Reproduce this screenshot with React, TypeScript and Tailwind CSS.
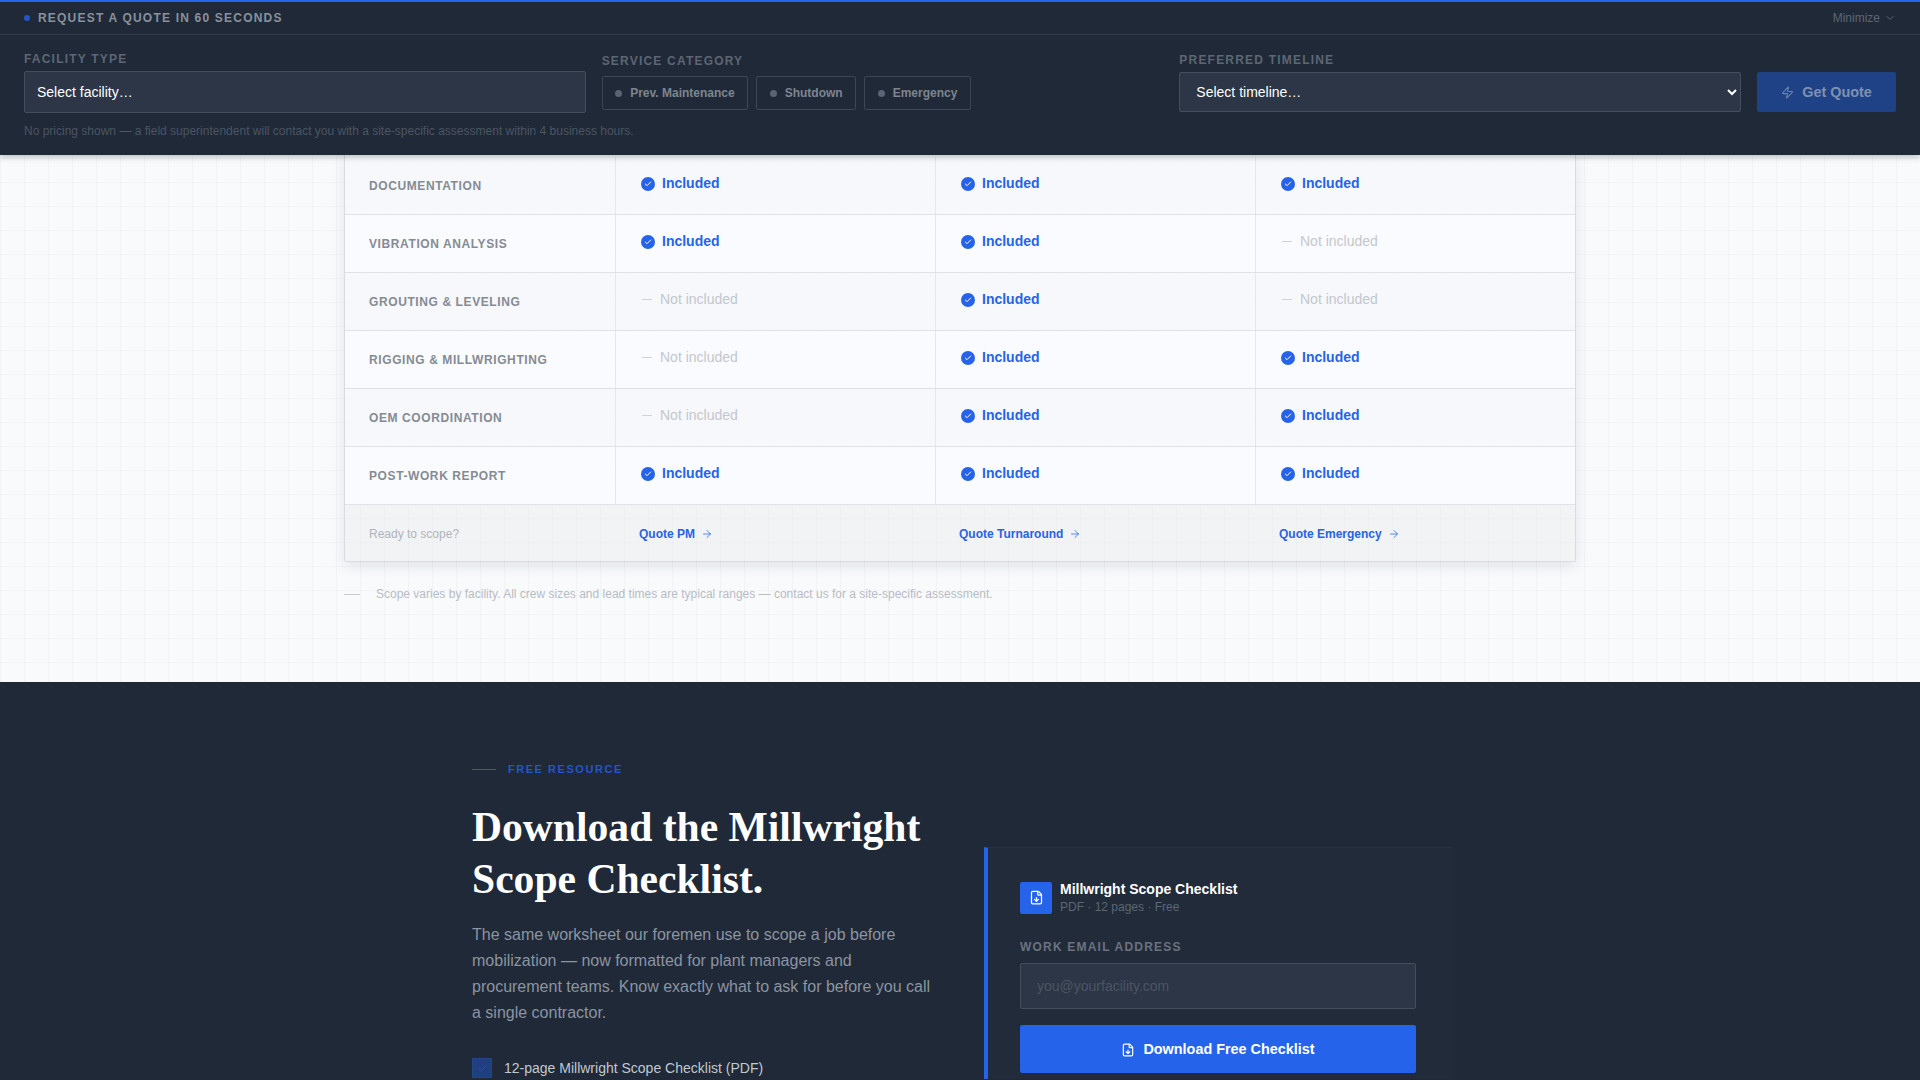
import React from "react";
import { Zap, ChevronDown, ArrowRight, Check, FileDown } from "lucide-react";

const rows: [string, boolean, boolean, boolean, string][] = [
  ["Documentation", true, true, true, "bg-[#f5f7fb]/90"],
  ["Vibration Analysis", true, true, false, "bg-[#fafbfe]/90"],
  ["Grouting & Leveling", false, true, false, "bg-[#f5f7fb]/90"],
  ["Rigging & Millwrighting", false, true, true, "bg-[#fafbfe]/90"],
  ["OEM Coordination", false, true, true, "bg-[#f5f7fb]/90"],
  ["Post-Work Report", true, true, true, "bg-[#fafbfe]/90"],
];

function Cell({ on, last }: { on: boolean; last?: boolean }) {
  return (
    <div className={`flex items-center pl-[25px] pb-1 ${last ? "" : "border-r border-[#e4e7ec]"}`}>
      {on ? (
        <span className="flex items-center gap-[7px] text-[14px] font-bold text-[#2563eb]">
          <span className="flex h-[14px] w-[14px] items-center justify-center rounded-full bg-[#2563eb]">
            <Check size={8} strokeWidth={3} className="text-white" />
          </span>
          Included
        </span>
      ) : (
        <span className="flex items-center gap-2 pl-px text-[14px] text-[#c3c7ce]">
          <span className="h-px w-[10px] bg-[#d0d4da]" />
          Not included
        </span>
      )}
    </div>
  );
}

function Chip({ label }: { label: string }) {
  return (
    <span className="flex h-[34px] items-center gap-[8px] rounded-[2px] border border-[#3c4656] px-[12.5px] text-[12px] font-bold text-[#7d8590]">
      <span className="h-[7px] w-[7px] rounded-full bg-[#5b6472]" />
      {label}
    </span>
  );
}

const lbl = "block text-[12px] leading-[14px] font-bold uppercase tracking-[0.1em] text-[#5d6674]";

export default function App() {
  return (
    <div className="flex h-[1080px] w-[1920px] flex-col overflow-hidden font-['Liberation_Sans',sans-serif]">
      <header className="relative z-10 border-t-2 border-[#2563eb] bg-[#1f2937] shadow-[0_2px_6px_rgba(0,0,0,0.25)]">
        <div className="flex h-[33px] items-center justify-between border-b border-[#323c4a] px-6">
          <div className="flex items-center gap-[8px]">
            <span className="h-[6px] w-[6px] rounded-full bg-[#2456c8]" />
            <span className="text-[12px] font-bold uppercase tracking-[0.1em] text-[#8a919c]">Request a quote in 60 seconds</span>
          </div>
          <div className="flex items-center gap-1 text-[12px] text-[#5d6674]">
            Minimize <ChevronDown size={12} />
          </div>
        </div>
        <div className="px-6 pt-[17px]">
          <div className="grid grid-cols-[1fr_1fr_1fr_139px] items-end gap-4">
            <div>
              <span className={`${lbl} mb-[5px]`}>Facility Type</span>
              <select className="h-[42px] w-full appearance-none rounded-[2px] border border-[#434d5c] bg-[#2c3646] px-3 text-[14px] text-white">
                <option>Select facility…</option>
              </select>
            </div>
            <div className="pb-[3px]">
              <span className={`${lbl} mb-[8px]`}>Service Category</span>
              <div className="flex gap-[8px]">
                <Chip label="Prev. Maintenance" />
                <Chip label="Shutdown" />
                <Chip label="Emergency" />
              </div>
            </div>
            <div className="pb-px">
              <span className={`${lbl} mb-[5px]`}>Preferred Timeline</span>
              <select className="h-[40px] w-full rounded-[2px] border border-[#434d5c] bg-[#2c3646] px-3 text-[14px] text-white">
                <option>Select timeline…</option>
              </select>
            </div>
            <button className="mb-px flex h-[40px] items-center justify-center gap-2 rounded-[2px] bg-[#1f4287] pt-px text-[14.4px] font-bold text-[#7f90b0]">
              <Zap size={13} className="text-[#6e82aa]" /> Get Quote
            </button>
          </div>
          <p className="pb-[15px] pt-[9px] text-[12px] leading-[18px] text-[#4b5563]">
            No pricing shown — a field superintendent will contact you with a site-specific assessment within 4 business hours.
          </p>
        </div>
      </header>

      <section className="h-[527px] shrink-0 bg-[#f8fafc] bg-[linear-gradient(rgba(30,41,59,0.022)_1px,transparent_1px),linear-gradient(90deg,rgba(30,41,59,0.032)_1px,transparent_1px)] bg-[size:24px_24px] bg-[position:0_3px]">
        <div className="mx-[344px] w-[1232px]">
          <div className="rounded-b-[2px] border-x border-b border-[#d8dbe0] shadow-[0_4px_14px_rgba(30,41,59,0.1)]">
            {rows.map(([name, a, b, c, bg], i) => (
              <div key={name} className={`grid grid-cols-[271px_320px_320px_1fr] border-b border-[#dfe2e7] ${bg} ${i === 0 ? "h-[60px] pt-[2px]" : "h-[58px]"}`}>
                <div className="flex items-center border-r border-[#e4e7ec] pl-6 text-[12px] font-bold uppercase tracking-[0.05em] text-[#858b94]">{name}</div>
                <Cell on={a} />
                <Cell on={b} />
                <Cell on={c} last />
              </div>
            ))}
            <div className="grid h-[56px] grid-cols-[271px_320px_320px_1fr] items-center bg-[#e9ebee]/50 pt-px text-[12px]">
              <span className="pl-6 text-[#b0b5bb]">Ready to scope?</span>
              {["Quote PM", "Quote Turnaround", "Quote Emergency"].map((t) => (
                <span key={t} className="flex items-center gap-[6px] pl-[23px] font-bold text-[#2563eb]">
                  {t} <ArrowRight size={12} strokeWidth={1.5} />
                </span>
              ))}
            </div>
          </div>
          <div className="mt-[23px] flex items-center gap-4 text-[12px] leading-[18px] text-[#b8bcc4]">
            <span className="h-px w-4 bg-[#c8ccd2]" />
            Scope varies by facility. All crew sizes and lead times are typical ranges — contact us for a site-specific assessment.
          </div>
        </div>
      </section>

      <section className="flex-1 overflow-hidden bg-[#1f2937] pt-[79px]">
        <div className="mx-[472px] grid w-[980px] grid-cols-[468px_468px] gap-[44px]">
          <div>
            <div className="flex items-center gap-3 text-[11px] font-bold uppercase tracking-[0.14em] text-[#2456c8]">
              <span className="h-px w-6 bg-[#2456c8]" />
              Free Resource
            </div>
            <h2 className="mt-[23px] font-['Liberation_Serif',serif] text-[41.6px] font-bold leading-[52px] text-white">
              Download the Millwright<br />Scope Checklist.
            </h2>
            <p className="mt-[17px] text-[16px] leading-[26px] text-[#8c94a1]">
              The same worksheet our foremen use to scope a job before mobilization — now formatted for plant managers and procurement teams. Know exactly what to ask for before you call a single contractor.
            </p>
            <div className="mt-[32px] flex items-center gap-3 text-[14px] text-[#c2c8d0]">
              <span className="flex h-5 w-5 items-center justify-center border border-[#234584] bg-[#203f80]">
                <Check size={11} className="text-[#31538f]" />
              </span>
              12-page Millwright Scope Checklist (PDF)
            </div>
          </div>
          <div className="mt-[86px] border-l-4 border-t border-[#2563eb] border-t-white/[0.04] bg-white/[0.01] pl-8 pr-9 pt-[31px]">
            <div className="flex items-center gap-2">
              <span className="flex h-8 w-8 items-center justify-center rounded-[2px] bg-[#2563eb]">
                <FileDown size={15} className="text-white" />
              </span>
              <div className="pt-[2px]">
                <div className="text-[14px] font-bold leading-[17px] text-white">Millwright Scope Checklist</div>
                <div className="text-[12px] leading-[18px] text-[#5d6674]">PDF · 12 pages · Free</div>
              </div>
            </div>
            <label className="mb-[7px] mt-[22px] block text-[12px] font-bold uppercase tracking-[0.1em] text-[#6b7280]">Work Email Address</label>
            <input placeholder="you@yourfacility.com" className="h-[46px] w-full rounded-[2px] border border-[#434d5c] bg-[#2c3646] px-4 text-[14px] placeholder:text-[#4b5563]" />
            <button className="mt-4 flex h-[48px] w-full items-center justify-center gap-[8px] rounded-[2px] bg-[#2563eb] pt-px text-[14.4px] font-bold text-white">
              <FileDown size={14} /> Download Free Checklist
            </button>
          </div>
        </div>
      </section>
    </div>
  );
}
